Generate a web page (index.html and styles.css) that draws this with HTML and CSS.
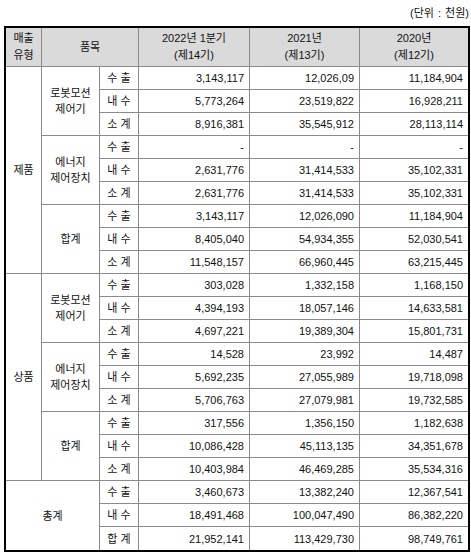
FILE: index.html
```html
<!DOCTYPE html>
<html lang="ko">
<head>
<meta charset="utf-8">
<title>매출 현황</title>
<link rel="stylesheet" href="styles.css">
</head>
<body>
<div class="page">
  <div class="unit">(단위 : 천원)</div>
  <table class="sales">
    <colgroup>
      <col class="c1"><col class="c2"><col class="c3"><col class="c4"><col class="c5"><col class="c6">
    </colgroup>
    <thead>
      <tr class="head">
        <th>매출<br>유형</th>
        <th colspan="2">품목</th>
        <th>2022년 1분기<br>(제14기)</th>
        <th>2021년<br>(제13기)</th>
        <th>2020년<br>(제12기)</th>
      </tr>
    </thead>
    <tbody>
      <tr><td class="ctr" rowspan="9">제품</td><td class="ctr" rowspan="3">로봇모션<br>제어기</td><td class="ctr">수 출</td><td class="num">3,143,117</td><td class="num">12,026,09</td><td class="num">11,184,904</td></tr>
      <tr><td class="ctr">내 수</td><td class="num">5,773,264</td><td class="num">23,519,822</td><td class="num">16,928,211</td></tr>
      <tr><td class="ctr">소 계</td><td class="num">8,916,381</td><td class="num">35,545,912</td><td class="num">28,113,114</td></tr>
      <tr><td class="ctr" rowspan="3">에너지<br>제어장치</td><td class="ctr">수 출</td><td class="num">-</td><td class="num">-</td><td class="num">-</td></tr>
      <tr><td class="ctr">내 수</td><td class="num">2,631,776</td><td class="num">31,414,533</td><td class="num">35,102,331</td></tr>
      <tr><td class="ctr">소 계</td><td class="num">2,631,776</td><td class="num">31,414,533</td><td class="num">35,102,331</td></tr>
      <tr><td class="ctr" rowspan="3">합계</td><td class="ctr">수 출</td><td class="num">3,143,117</td><td class="num">12,026,090</td><td class="num">11,184,904</td></tr>
      <tr><td class="ctr">내 수</td><td class="num">8,405,040</td><td class="num">54,934,355</td><td class="num">52,030,541</td></tr>
      <tr><td class="ctr">소 계</td><td class="num">11,548,157</td><td class="num">66,960,445</td><td class="num">63,215,445</td></tr>

      <tr><td class="ctr" rowspan="9">상품</td><td class="ctr" rowspan="3">로봇모션<br>제어기</td><td class="ctr">수 출</td><td class="num">303,028</td><td class="num">1,332,158</td><td class="num">1,168,150</td></tr>
      <tr><td class="ctr">내 수</td><td class="num">4,394,193</td><td class="num">18,057,146</td><td class="num">14,633,581</td></tr>
      <tr><td class="ctr">소 계</td><td class="num">4,697,221</td><td class="num">19,389,304</td><td class="num">15,801,731</td></tr>
      <tr><td class="ctr" rowspan="3">에너지<br>제어장치</td><td class="ctr">수 출</td><td class="num">14,528</td><td class="num">23,992</td><td class="num">14,487</td></tr>
      <tr><td class="ctr">내 수</td><td class="num">5,692,235</td><td class="num">27,055,989</td><td class="num">19,718,098</td></tr>
      <tr><td class="ctr">소 계</td><td class="num">5,706,763</td><td class="num">27,079,981</td><td class="num">19,732,585</td></tr>
      <tr><td class="ctr" rowspan="3">합계</td><td class="ctr">수 출</td><td class="num">317,556</td><td class="num">1,356,150</td><td class="num">1,182,638</td></tr>
      <tr><td class="ctr">내 수</td><td class="num">10,086,428</td><td class="num">45,113,135</td><td class="num">34,351,678</td></tr>
      <tr><td class="ctr">소 계</td><td class="num">10,403,984</td><td class="num">46,469,285</td><td class="num">35,534,316</td></tr>

      <tr><td class="ctr last" rowspan="3" colspan="2">총계</td><td class="ctr">수 출</td><td class="num">3,460,673</td><td class="num">13,382,240</td><td class="num">12,367,541</td></tr>
      <tr><td class="ctr">내 수</td><td class="num">18,491,468</td><td class="num">100,047,490</td><td class="num">86,382,220</td></tr>
      <tr class="end"><td class="ctr">합 계</td><td class="num">21,952,141</td><td class="num">113,429,730</td><td class="num">98,749,761</td></tr>
    </tbody>
  </table>
</div>
</body>
</html>
```

FILE: styles.css
```css
html, body {
  margin: 0;
  padding: 0;
  background: #ffffff;
}

body {
  font-family: "Liberation Sans", "Noto Sans CJK KR", sans-serif;
  font-size: 11px;
  color: #111111;
}

.page {
  width: 466px;
  padding: 4px 0 0 4px;
}

.unit {
  height: 18px;
  line-height: 18px;
  margin-bottom: 4px;
  text-align: right;
  padding-right: 1px;
  word-spacing: 1px;
}

.sales {
  width: 466px;
  table-layout: fixed;
  border-collapse: separate;
  border-spacing: 0;
  border: 2px solid #000000;
}

.c1 { width: 36px; }
.c2 { width: 58px; }
.c3 { width: 39px; }
.c4 { width: 111px; }
.c5 { width: 110px; }
.c6 { width: 108px; }

.sales th,
.sales td {
  box-sizing: border-box;
  border-right: 1px solid #8a8a8a;
  border-bottom: 1px solid #8a8a8a;
  padding: 0 5px;
  font-weight: normal;
  white-space: nowrap;
}

.sales th:last-child,
.sales td:last-child {
  border-right: 0;
}

.head th {
  height: 39px;
  background: #dadada;
  text-align: center;
  line-height: 17px;
  padding: 0 2px;
}

.sales td {
  height: 23px;
  line-height: 16px;
}

.sales td.ctr {
  text-align: center;
  padding: 0 1px;
}

.sales td.num {
  text-align: right;
}

.sales td.last,
.end td {
  border-bottom: 0;
}
```
